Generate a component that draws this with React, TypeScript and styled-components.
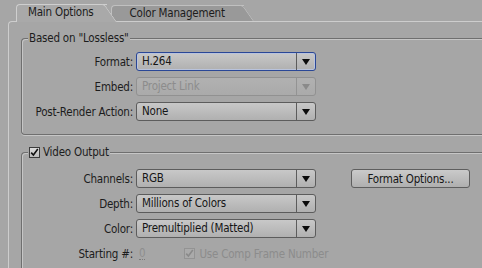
import React from "react"
import styled, { createGlobalStyle, css } from "styled-components"

const GlobalStyle = createGlobalStyle`
  html, body {
    margin: 0;
    padding: 0;
    background: #a6a6a6;
    overflow: hidden;
  }
  body {
    font-family: "DejaVu Sans Condensed", "DejaVu Sans", sans-serif;
    font-stretch: condensed;
    font-size: 11.5px;
    letter-spacing: -0.2px;
    color: #1c1c1c;
  }
`

const Window = styled.div`
  width: 540px;
  height: 268px;
  padding-top: 5px;
  box-sizing: border-box;
  background: #a6a6a6;
`

const TabBar = styled.div`
  display: flex;
  align-items: flex-end;
  padding-left: 16px;
  height: 17px;
  margin-bottom: -1px;
  position: relative;
  z-index: 1;
`

const Tab = styled.div<{ $active?: boolean }>`
  position: relative;
  isolation: isolate;
  box-sizing: border-box;
  white-space: nowrap;
  ${(p) =>
    p.$active
      ? css`
          height: 18px;
          line-height: 17px;
          padding: 0 23px 0 12px;
          z-index: 2;
        `
      : css`
          height: 16px;
          line-height: 16px;
          padding: 0 29px 0 19px;
          margin-left: -6px;
          margin-bottom: 1px;
          z-index: 1;
        `}

  &::before,
  &::after {
    content: "";
    position: absolute;
    top: 0;
    bottom: 0;
    z-index: -1;
    background: ${(p) => (p.$active ? "#a9a9a9" : "#999999")};
    border-top: 1px solid ${(p) => (p.$active ? "#cfcfcf" : "#c0c0c0")};
  }
  &::before {
    left: 0;
    right: 10px;
    border-left: 1px solid ${(p) => (p.$active ? "#cfcfcf" : "#c0c0c0")};
    border-top-left-radius: 4px;
  }
  &::after {
    right: 0;
    width: 22px;
    border-right: 1px solid ${(p) => (p.$active ? "#cfcfcf" : "#c0c0c0")};
    border-top-right-radius: 3px;
    transform: skewX(35deg);
    transform-origin: bottom right;
  }
`

const Panel = styled.div`
  margin-left: 8px;
  border-top: 1px solid #cdcdcd;
  border-left: 1px solid #cdcdcd;
  border-top-left-radius: 4px;
  padding: 0 0 0 12px;
  height: 260px;
  display: flex;
  flex-direction: column;
`

const Group = styled.section<{ $gap: number }>`
  margin-top: ${(p) => p.$gap}px;
  border: 1px solid #6f6f6f;
  border-right: none;
  border-radius: 4px 0 0 4px;
  box-shadow: inset 1px 1px 0 #c6c6c6, 0 1px 0 #c6c6c6;
  display: flex;
  flex-direction: column;
`

const Legend = styled.div`
  align-self: flex-start;
  display: flex;
  align-items: center;
  gap: 3px;
  height: 14px;
  line-height: 14px;
  margin: -8px 0 0 6px;
  padding: 0 1px;
  background: #a6a6a6;
`

const Rows = styled.div<{ $top: number; $bottom: number }>`
  display: flex;
  flex-direction: column;
  gap: 6px;
  padding: ${(p) => p.$top}px 0 ${(p) => p.$bottom}px 0;
`

const Row = styled.div`
  display: flex;
  align-items: center;
  height: 19px;
  gap: 3px;
`

const Label = styled.div`
  width: 111px;
  text-align: right;
  white-space: nowrap;
  color: #1c1c1c;
`

const SelectBox = styled.div<{ $focused?: boolean; $disabled?: boolean }>`
  width: 180px;
  height: 19px;
  box-sizing: border-box;
  display: flex;
  border: 1px solid #5c5c5c;
  border-radius: 3px;
  background: linear-gradient(#c8c8c8, #b0b0b0);
  ${(p) =>
    p.$focused &&
    css`
      border-color: #2a4796;
      box-shadow: inset 0 0 0 1px #b9c3dc;
    `}
  ${(p) =>
    p.$disabled &&
    css`
      border-color: #919191;
      background: linear-gradient(#b1b1b1, #aaaaaa);
    `}
`

const SelectValue = styled.div<{ $disabled?: boolean }>`
  flex: 1;
  padding-left: 5px;
  line-height: 17px;
  white-space: nowrap;
  overflow: hidden;
  color: ${(p) => (p.$disabled ? "#8c8c8c" : "#161616")};
`

const ArrowBox = styled.div<{ $disabled?: boolean }>`
  width: 18px;
  display: flex;
  align-items: center;
  justify-content: center;
  border-left: 1px solid ${(p) => (p.$disabled ? "#939393" : "#5c5c5c")};

  &::after {
    content: "";
    width: 0;
    height: 0;
    border-left: 4px solid transparent;
    border-right: 4px solid transparent;
    border-top: 6px solid ${(p) => (p.$disabled ? "#8a8a8a" : "#0c0c0c")};
    margin-top: 1px;
  }
`

const Button = styled.button`
  margin-left: 32px;
  width: 119px;
  height: 19px;
  box-sizing: border-box;
  border: 1px solid #5e5e5e;
  border-radius: 3px;
  background: linear-gradient(#cacaca, #afafaf);
  font: inherit;
  letter-spacing: inherit;
  color: #161616;
  padding: 0;
`

const CheckBox = styled.span<{ $disabled?: boolean }>`
  width: 11px;
  height: 11px;
  box-sizing: border-box;
  display: inline-flex;
  align-items: center;
  justify-content: center;
  border: 1px solid ${(p) => (p.$disabled ? "#939393" : "#3c3c3c")};
  background: ${(p) => (p.$disabled ? "#aaaaaa" : "linear-gradient(#dcdcdc, #bcbcbc)")};
`

const Value = styled.span`
  color: #8e8e8e;
  border-bottom: 1px dotted #7a7a7a;
  line-height: 12px;
  margin-left: 3px;
`

const CheckLabel = styled.label<{ $disabled?: boolean }>`
  display: flex;
  align-items: center;
  gap: 4px;
  margin-left: 36px;
  color: ${(p) => (p.$disabled ? "#8c8c8c" : "#1c1c1c")};
  white-space: nowrap;
`

const Check = ({ disabled }: { disabled?: boolean }) => (
  <CheckBox $disabled={disabled}>
    <svg width="9" height="9" viewBox="0 0 9 9">
      <path
        d="M1.2 4.6 L3.4 7 L7.8 1"
        fill="none"
        stroke={disabled ? "#8a8a8a" : "#111"}
        strokeWidth="1.6"
      />
    </svg>
  </CheckBox>
)

const Select = ({
  value,
  focused,
  disabled,
}: {
  value: string
  focused?: boolean
  disabled?: boolean
}) => (
  <SelectBox $focused={focused} $disabled={disabled}>
    <SelectValue $disabled={disabled}>{value}</SelectValue>
    <ArrowBox $disabled={disabled} />
  </SelectBox>
)

export default function App() {
  return (
    <Window>
      <GlobalStyle />
      <TabBar>
        <Tab $active>Main Options</Tab>
        <Tab>Color Management</Tab>
      </TabBar>
      <Panel>
        <Group $gap={16}>
          <Legend>Based on "Lossless"</Legend>
          <Rows $top={7} $bottom={13}>
            <Row>
              <Label>Format:</Label>
              <Select value="H.264" focused />
            </Row>
            <Row>
              <Label>Embed:</Label>
              <Select value="Project Link" disabled />
            </Row>
            <Row>
              <Label>Post-Render Action:</Label>
              <Select value="None" />
            </Row>
          </Rows>
        </Group>
        <Group $gap={17}>
          <Legend>
            <Check />
            Video Output
          </Legend>
          <Rows $top={10} $bottom={20}>
            <Row>
              <Label>Channels:</Label>
              <Select value="RGB" />
              <Button>Format Options...</Button>
            </Row>
            <Row>
              <Label>Depth:</Label>
              <Select value="Millions of Colors" />
            </Row>
            <Row>
              <Label>Color:</Label>
              <Select value="Premultiplied (Matted)" />
            </Row>
            <Row>
              <Label>Starting #:</Label>
              <Value>0</Value>
              <CheckLabel $disabled>
                <Check disabled />
                Use Comp Frame Number
              </CheckLabel>
            </Row>
          </Rows>
        </Group>
      </Panel>
    </Window>
  )
}
